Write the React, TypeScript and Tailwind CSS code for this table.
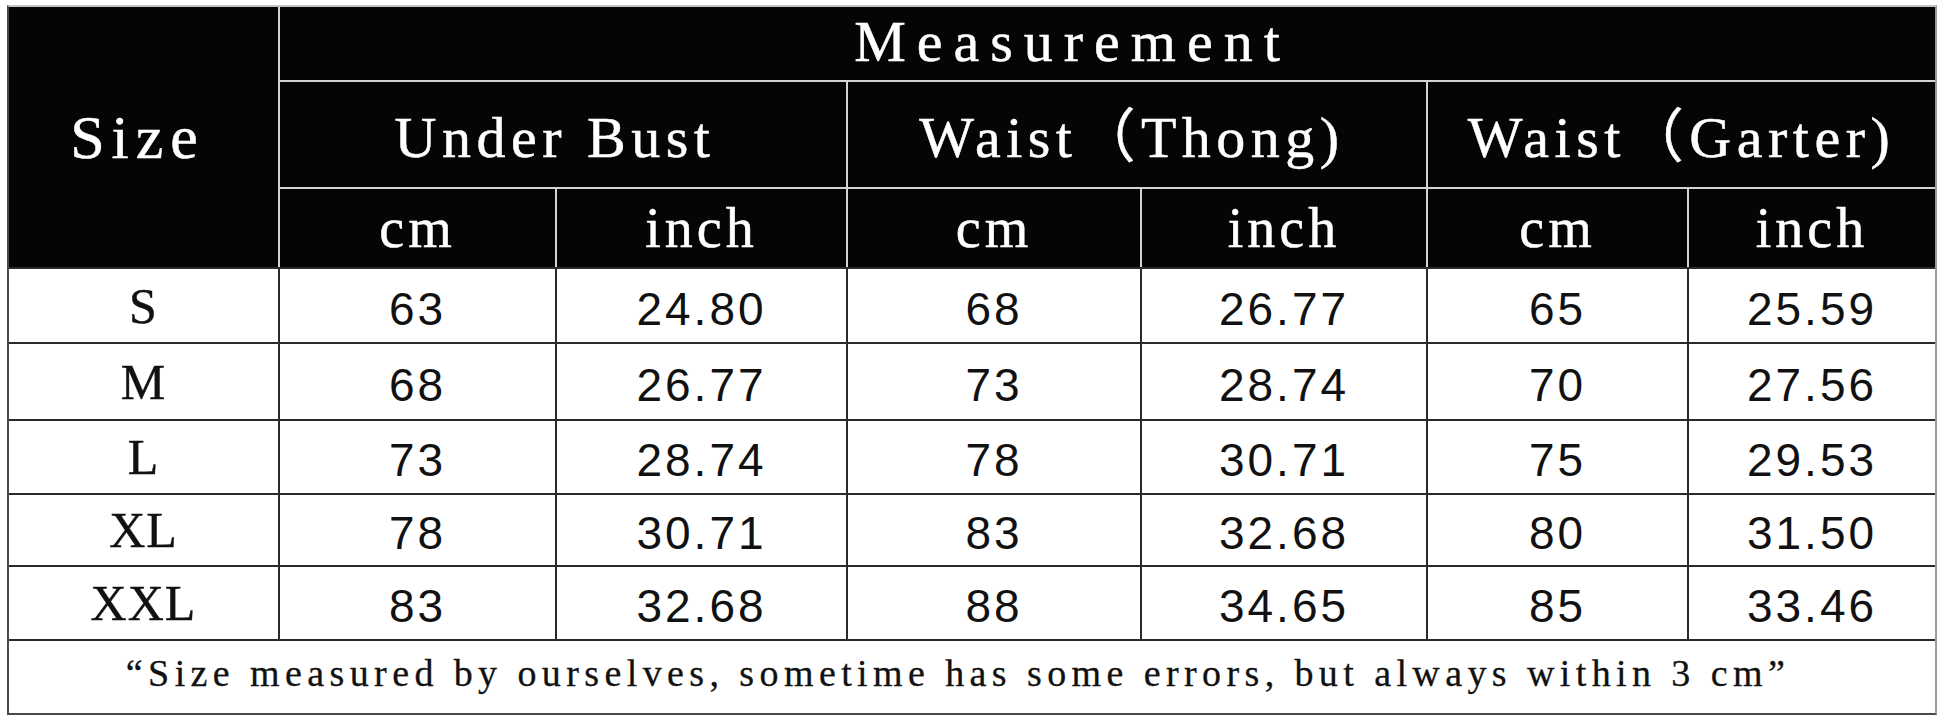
const cols = "grid grid-cols-[271px_277px_291px_294px_286px_261px_246px]";
const serif = "font-['Liberation_Serif','Noto_Sans_CJK_SC',serif]";
const sans = "font-['Liberation_Sans',Arial,sans-serif]";

const rows = [
  { size: "S", h: "h-[75px]", v: ["63", "24.80", "68", "26.77", "65", "25.59"] },
  { size: "M", h: "h-[77px]", v: ["68", "26.77", "73", "28.74", "70", "27.56"] },
  { size: "L", h: "h-[74px]", v: ["73", "28.74", "78", "30.71", "75", "29.53"] },
  { size: "XL", h: "h-[72px]", v: ["78", "30.71", "83", "32.68", "80", "31.50"] },
  { size: "XXL", h: "h-[74px]", v: ["83", "32.68", "88", "34.65", "85", "33.46"] },
];

const groups = [
  { label: "Under Bust", pad: "pr-[16px] border-r-2" },
  { label: "Waist（Thong)", pad: "pr-[10px] border-r-2" },
  { label: "Waist（Garter)", pad: "" },
];

export default function App() {
  return (
    <div className="w-[1946px] h-[720px] bg-white pt-[5px] pl-[7px]">
      <div className="w-[1930px] border-2 border-[#4a4a4a] border-t-[#c4c4c4] border-r-[#9a9a9a] bg-white">
        {/* header */}
        <div
          className={`${cols} grid-rows-[75px_107px_78px] bg-[#050505] text-white ${serif} [-webkit-text-stroke:0.5px_#fff]`}
        >
          <div className="row-span-3 flex items-center justify-center border-r-2 border-[#d4d4d4] text-[62px] tracking-[7px] leading-none pr-[12px]">
            Size
          </div>
          <div className="col-span-6 flex items-center justify-center border-b-2 border-[#d4d4d4] text-[58px] tracking-[11px] leading-none pb-[3px] pr-[70px]">
            Measurement
          </div>
          {groups.map((g) => (
            <div
              key={g.label}
              className={`col-span-2 flex items-center justify-center border-b-2 border-[#d4d4d4] text-[58px] tracking-[5.5px] leading-none pt-[6px] ${g.pad}`}
            >
              {g.label}
            </div>
          ))}
          {["cm", "inch", "cm", "inch", "cm", "inch"].map((u, i) => (
            <div
              key={i}
              className={`flex items-center justify-center border-[#d4d4d4] text-[56px] tracking-[4px] leading-none ${
                i < 5 ? "border-r-2" : ""
              }`}
            >
              {u}
            </div>
          ))}
        </div>

        {/* body */}
        {rows.map((r) => (
          <div key={r.size} className={`${cols} ${r.h} border-t-2 border-[#2a2a2a] text-[#111]`}>
            <div
              className={`flex items-center justify-center border-r-2 border-[#2a2a2a] ${serif} text-[50px] tracking-[1px] leading-none [-webkit-text-stroke:0.4px_#111]`}
            >
              {r.size}
            </div>
            {r.v.map((n, i) => (
              <div
                key={i}
                className={`flex items-center justify-center border-[#2a2a2a] ${sans} text-[46px] tracking-[3px] leading-none pt-[6px] ${
                  i < 5 ? "border-r-2" : ""
                }`}
              >
                {n}
              </div>
            ))}
          </div>
        ))}

        <div
          className={`h-[74px] flex items-center justify-center border-t-2 border-[#2a2a2a] text-[#111] ${serif} text-[38px] tracking-[5.4px] leading-none pb-[8px] pr-[28px] [-webkit-text-stroke:0.3px_#111]`}
        >
          “Size measured by ourselves, sometime has some errors, but always within 3 cm”
        </div>
      </div>
    </div>
  );
}
